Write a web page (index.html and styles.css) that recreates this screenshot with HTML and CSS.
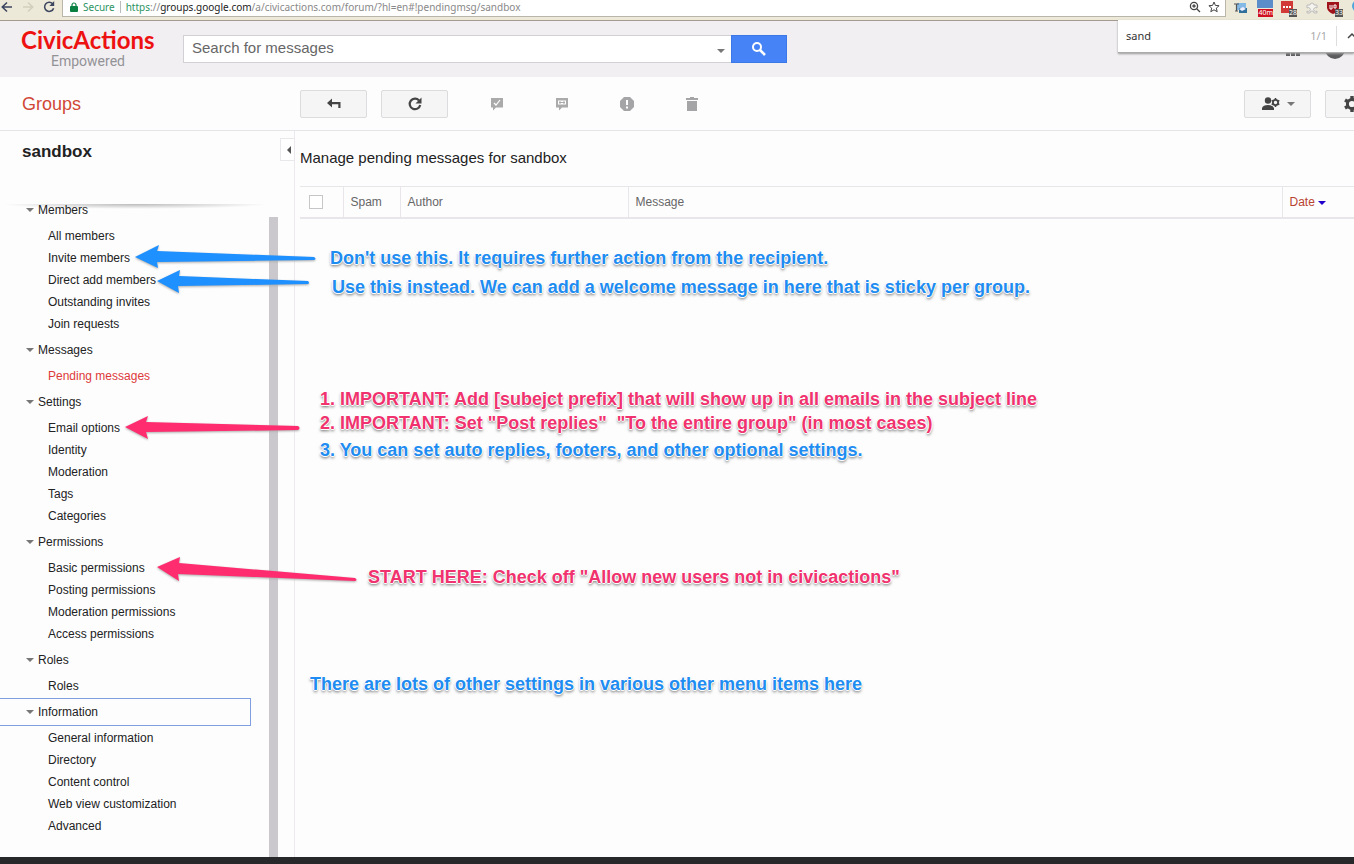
FILE: index.html
```html
<!DOCTYPE html>
<html lang="en">
<head>
<meta charset="utf-8">
<title>sandbox - Groups</title>
<link rel="stylesheet" href="styles.css">
</head>
<body>
<div class="browser">
  <div class="browser-nav">
    <button class="plain" aria-label="Back"><svg width="14" height="14" viewBox="0 0 14 14"><path d="M12 7H2.500M7 2.500L2.300 7L7 11.500" fill="none" stroke="#3d4660" stroke-width="1.600"/></svg></button>
    <button class="plain" aria-label="Forward"><svg width="14" height="14" viewBox="0 0 14 14"><path d="M2 7h9.500M7 2.500L11.700 7L7 11.500" fill="none" stroke="#d3cfbd" stroke-width="1.600"/></svg></button>
    <button class="plain" aria-label="Reload"><svg width="14" height="14" viewBox="0 0 14 14"><path d="M11 4.200A4.600 4.600 0 1 0 11.600 8.200" fill="none" stroke="#3d4660" stroke-width="1.600"/><path d="M12.200 1v5H7.400z" fill="#3d4660"/></svg></button>
  </div>
  <div class="address">
    <svg width="8" height="10" viewBox="0 0 8 10"><path d="M1 4h6q1 0 1 1v4q0 1-1 1H1q-1 0-1-1V5q0-1 1-1z" fill="#0b8043"/><path d="M2 4.500V3a2 2 0 0 1 4 0v1.500" fill="none" stroke="#0b8043" stroke-width="1.200"/></svg>
    <span class="secure">Secure</span>
    <span class="url"><span class="scheme">https</span>://<span class="host">groups.google.com</span>/a/civicactions.com/forum/?hl=en#!pendingmsg/sandbox</span>
    <span class="address-tools">
      <svg width="12" height="12" viewBox="0 0 12 12"><circle cx="5" cy="5" r="3.600" fill="none" stroke="#444" stroke-width="1.300"/><path d="M7.700 7.700L11 11M3.300 5h3.400M5 3.300v3.400" stroke="#444" stroke-width="1.300"/></svg>
      <svg width="12" height="12" viewBox="0 0 12 12"><path d="M6 1l1.400 3.400 3.700.3-2.800 2.400.9 3.600L6 8.800l-3.200 1.900.9-3.600L.9 4.700l3.700-.3z" fill="none" stroke="#444"/></svg>
    </span>
  </div>
  <div class="extensions">
    <svg width="16" height="18" viewBox="0 0 16 18"><path d="M4 3h9v7H4z" fill="#84b9e6"/><path d="M6 8h8v5H6z" fill="#2e6f9c"/><path d="M6 9l4-2 3 2-4 2z" fill="#eef"/><path d="M1 4h5M3.500 4v7M2 11h3" stroke="#555" stroke-width="1.200"/></svg>
    <span class="ext ext-calendar"><span class="tag">40m</span></span>
    <span class="ext ext-dots"><svg width="12" height="12" viewBox="0 0 12 12"><path d="M0 0h12v12H0z" fill="#d13a36"/><path d="M2 6h2M5 6h2M8 6h2" stroke="#fff" stroke-width="2"/></svg><span class="count">28</span></span>
    <svg width="14" height="18" viewBox="0 0 14 18"><path d="M2 5h3a2 2 0 1 1 4 0h3v3a2 2 0 1 0 0 3v2H9a2 2 0 1 0-4 0H2v-2a2 2 0 1 0 0-3z" fill="#f6f4ee" stroke="#bbb"/></svg>
    <span class="ext ext-shield"><svg width="12" height="13" viewBox="0 0 12 13"><path d="M0 1h12v6q-1 4-6 6q-5-2-6-6z" fill="#a0131b"/><path d="M3 4v4h2V4M7 4h2v3H7z" fill="none" stroke="#fff"/></svg><span class="count">33</span></span>
    <svg width="6" height="14" viewBox="0 0 6 14"><circle cx="7" cy="6" r="6" fill="#4da6dc"/></svg>
  </div>
</div>

<header class="header">
  <a class="logo" href="#"><span class="logo-name">CivicActions</span><span class="logo-sub">Empowered</span></a>
  <form class="search">
    <input class="search-input" type="text" aria-label="Search for messages" placeholder="Search for messages">
    <button class="search-menu" type="button" aria-label="Search options"><i class="caret"></i></button>
    <button class="search-button" type="button" aria-label="Search"><svg width="16" height="16" viewBox="0 0 16 16"><circle cx="6" cy="6" r="4" fill="none" stroke="#fff" stroke-width="2"/><path d="M9 9l5 5" stroke="#fff" stroke-width="2.600"/></svg></button>
  </form>
  <div class="account">
    <svg width="16" height="16" viewBox="0 0 16 16"><path d="M1 0h4v4H1zM6 0h4v4H6zM11 0h4v4h-4zM1 5h4v4H1zM6 5h4v4H6zM11 5h4v4h-4zM1 11h4v4H1zM6 11h4v4H6zM11 11h4v4h-4z" fill="#5c5c5e"/></svg>
    <svg width="20" height="20" viewBox="0 0 20 20"><circle cx="10" cy="10" r="10" fill="#5c5c5e"/></svg>
  </div>
</header>
<div class="find">
  <input class="find-input" type="text" aria-label="Find in page" value="sand">
  <span class="find-count">1/1</span>
  <button class="plain find-prev" aria-label="Previous match"><svg width="10" height="8" viewBox="0 0 10 8"><path d="M1 6l4-4 4 4" fill="none" stroke="#444" stroke-width="1.500"/></svg></button>
</div>

<div class="toolbar">
  <a class="product" href="#">Groups</a>
  <div class="actions">
    <button class="btn" aria-label="Back to topics"><svg width="16" height="14" viewBox="0 0 16 14"><path d="M1 6l5-4.500v3.500h8.500v6h-2.200V7.200H6v3.300z" fill="#444"/></svg></button>
    <button class="btn" aria-label="Refresh"><svg width="16" height="16" viewBox="0 0 16 16"><path d="M12 4.400A5.300 5.300 0 1 0 13.200 9" fill="none" stroke="#444" stroke-width="2.200"/><path d="M14.500 1.500v6h-6z" fill="#444"/></svg></button>
    <div class="ghosts">
      <button class="ghost" aria-label="Approve"><svg width="14" height="14" viewBox="0 0 14 14"><path d="M1 1h12v9.500H6L3 13.500v-3H1z" fill="#aaa"/><path d="M4 6l2 2 4-5" fill="none" stroke="#fff" stroke-width="1.200"/></svg></button>
      <button class="ghost" aria-label="Reply"><svg width="14" height="14" viewBox="0 0 14 14"><path d="M1 1h12v9.500H7L4 13.500v-3H1z" fill="#aaa"/><path d="M3 3.500h8v4H3z" fill="#fff"/><path d="M4 4.500h2v2H4zM8 4.500h2v2H8zM6 5h2v1H6z" fill="#aaa"/></svg></button>
      <button class="ghost" aria-label="Report spam"><svg width="14" height="14" viewBox="0 0 14 14"><path d="M4 0h6l4 4v6l-4 4H4l-4-4V4z" fill="#a5a5a7"/><path d="M6 3h2v5H6zM6 9.500h2v2H6z" fill="#fff"/></svg></button>
      <button class="ghost" aria-label="Delete"><svg width="14" height="16" viewBox="0 0 14 16"><path d="M5 1h4v1h4v2H1V2h4zM2 5h10v10H2z" fill="#a5a5a7"/></svg></button>
    </div>
  </div>
  <div class="settings">
    <button class="btn" aria-label="Membership settings"><svg width="20" height="14" viewBox="0 0 20 14"><circle cx="7" cy="3.500" r="3.200" fill="#444"/><path d="M1 13v-2q1-3 6-3t6 3v2z" fill="#444"/><circle cx="14.500" cy="5.500" r="2.600" fill="none" stroke="#444" stroke-width="1.800"/><path d="M14.500 1v2M14.500 8v2M10.700 3.300l1.500 1M16.800 6.700l1.500 1M10.700 7.700l1.500-1M16.800 4.300l1.500-1" stroke="#444" stroke-width="1.600"/></svg><i class="caret"></i></button>
    <button class="btn" aria-label="Settings"><svg width="18" height="18" viewBox="0 0 18 18"><circle cx="9" cy="9" r="4.600" fill="none" stroke="#444" stroke-width="3"/><path d="M9 1v3M9 14v3M2 5l2.600 1.500M13.400 11.500L16 13M2 13l2.600-1.500M13.400 6.500L16 5" stroke="#444" stroke-width="3.400"/></svg><i class="caret"></i></button>
  </div>
</div>

<div class="body">
  <aside class="sidebar">
    <h1 class="group-name">sandbox</h1>
    <button class="collapse" aria-label="Collapse sidebar"><i class="caret-left"></i></button>
    <div class="scroll-area">
      <nav class="menu">
        <section>
          <h2 class="head"><i class="caret"></i>Members</h2>
          <ul><li><a href="#">All members</a></li><li><a href="#">Invite members</a></li><li><a href="#">Direct add members</a></li><li><a href="#">Outstanding invites</a></li><li><a href="#">Join requests</a></li></ul>
        </section>
        <section>
          <h2 class="head"><i class="caret"></i>Messages</h2>
          <ul><li><a class="current" href="#">Pending messages</a></li></ul>
        </section>
        <section>
          <h2 class="head"><i class="caret"></i>Settings</h2>
          <ul><li><a href="#">Email options</a></li><li><a href="#">Identity</a></li><li><a href="#">Moderation</a></li><li><a href="#">Tags</a></li><li><a href="#">Categories</a></li></ul>
        </section>
        <section>
          <h2 class="head"><i class="caret"></i>Permissions</h2>
          <ul><li><a href="#">Basic permissions</a></li><li><a href="#">Posting permissions</a></li><li><a href="#">Moderation permissions</a></li><li><a href="#">Access permissions</a></li></ul>
        </section>
        <section>
          <h2 class="head"><i class="caret"></i>Roles</h2>
          <ul><li><a href="#">Roles</a></li></ul>
        </section>
        <section>
          <h2 class="head focused"><i class="caret"></i>Information</h2>
          <ul><li><a href="#">General information</a></li><li><a href="#">Directory</a></li><li><a href="#">Content control</a></li><li><a href="#">Web view customization</a></li><li><a href="#">Advanced</a></li></ul>
        </section>
      </nav>
      <div class="track"></div>
    </div>
  </aside>
  <main class="content">
    <h2 class="title">Manage pending messages for sandbox</h2>
    <table class="list">
      <thead><tr>
        <th class="col-check"><input type="checkbox" aria-label="Select all"></th>
        <th class="col-spam">Spam</th>
        <th class="col-author">Author</th>
        <th>Message</th>
        <th class="col-date">Date <i class="caret"></i></th>
      </tr></thead>
    </table>
  </main>
</div>
<footer class="dock"></footer>

<div class="notes">
  <svg class="arrows" width="400" height="620" viewBox="0 0 400 620">
    <g fill="#1e90ff">
      <path d="M135 257L159 245L157 251L314 257Q317 259 314 260L157 262L158 268z"/>
      <path d="M157 281L180 270L179 276L308 281Q310 283 308 284L178 286L179 293z"/>
    </g>
    <g fill="#ff2d6f">
      <path d="M125 427L148 416L146 422L298 426Q301 428 298 430L146 432L148 439z"/>
      <path d="M157 567L180 557L179 563L355 578Q358 580 355 581L178 574L179 581z"/>
    </g>
  </svg>
  <p class="note blue n1">Don't use this. It requires further action from the recipient.</p>
  <p class="note blue n2">Use this instead. We can add a welcome message in here that is sticky per group.</p>
  <p class="note pink n3">1. IMPORTANT: Add [subejct prefix] that will show up in all emails in the subject line</p>
  <p class="note pink n4">2. IMPORTANT: Set "Post replies"&nbsp; "To the entire group" (in most cases)</p>
  <p class="note blue n5">3. You can set auto replies, footers, and other optional settings.</p>
  <p class="note pink n6">START HERE: Check off "Allow new users not in civicactions"</p>
  <p class="note blue n7">There are lots of other settings in various other menu items here</p>
</div>
</body>
</html>
```
FILE: styles.css
```css
* { box-sizing: border-box; }
body {
  margin: 0;
  min-height: 100vh;
  display: flex;
  flex-direction: column;
  position: relative;
  overflow: hidden;
  background: #fdfdfe;
  color: #222;
  font: 12px/22px "Liberation Sans", Arial, sans-serif;
}
h1, h2, p, ul { margin: 0; padding: 0; font-weight: normal; }
ul { list-style: none; }
a { color: inherit; text-decoration: none; }
button { font: inherit; padding: 0; cursor: pointer; }
svg { display: block; flex: none; }
.plain { border: 0; background: none; }
.caret {
  flex: none;
  display: inline-block;
  border: 4px solid transparent;
  border-top-color: #777;
  border-bottom: 0;
}

/* browser bar */
.browser {
  display: flex;
  height: 21px;
  background: #ede9d9;
  border-bottom: 1px solid #a59a8e;
  font: 10px/14px "Noto Sans", sans-serif;
}
.browser-nav { display: flex; gap: 7px; width: 62px; height: 14px; }
.address {
  flex: 1;
  display: flex;
  align-items: center;
  gap: 5px;
  height: 17px;
  padding: 0 5px 3px 7px;
  background: #fff;
  border: 1px solid #b9b5aa;
  border-top: 0;
}
.secure { color: #2c9461; padding-right: 5px; border-right: 1px solid #bbb; line-height: 12px; }
.scheme { color: #2c9461; }
.url { color: #888; }
.host { color: #222; }
.address-tools { display: flex; gap: 7px; margin-left: auto; }
.extensions { display: flex; gap: 8px; padding-left: 7px; width: 128px; overflow: hidden; }
.ext { position: relative; width: 16px; height: 18px; flex: none; padding-top: 1px; }
.ext-calendar { border-top: 8px solid #5b8dca; }
.tag, .count { position: absolute; right: 0; bottom: 1px; color: #fff; font-size: 7px; line-height: 8px; }
.tag { background: #cf1020; }
.count { background: #555; }

/* header */
.header {
  display: flex;
  align-items: flex-start;
  height: 56px;
  padding-left: 21px;
  background: #f1eff2;
}
.logo { width: 162px; display: flex; flex-direction: column; }
.logo-name { color: #ee1111; font: bold 24px/36px "Liberation Sans Narrow", Lato, sans-serif; padding-top: 1px; }
.logo-sub { color: #939296; font: 14px/16px Roboto, sans-serif; padding-left: 30px; margin-top: -5px; }
.search { display: flex; width: 604px; height: 28px; margin-top: 14px; }
.search-input {
  flex: 1;
  min-width: 0;
  padding: 0 8px 3px;
  border: 1px solid #d2d0d4;
  border-right: 0;
  background: #fff;
  font: 15px "Liberation Sans", Arial, sans-serif;
}
.search-input::placeholder { color: #666; opacity: 1; }
.search-menu { width: 20px; border: 1px solid #d2d0d4; border-width: 1px 0; background: #fff; line-height: 8px; }
.search-button { display: flex; align-items: center; justify-content: center; width: 56px; border: 1px solid #3b78e7; background: #4683f6; }
.account { display: flex; gap: 24px; margin: 18px 9px 0 auto; align-items: center; }
.find {
  position: absolute;
  top: 20px;
  right: 0;
  width: 236px;
  height: 33px;
  display: flex;
  align-items: center;
  padding-left: 8px;
  background: #fff;
  border-bottom: 1px solid #aaa;
  box-shadow: 0 1px 2px #999;
  font: 11px/16px "Noto Sans", sans-serif;
}
.find-input { flex: 1; min-width: 0; padding: 0; border: 0; font: inherit; color: #333; }
.find-count { color: #aaa; padding-right: 9px; border-right: 1px solid #ddd; line-height: 20px; }
.find-prev { width: 17px; padding-left: 10px; overflow: hidden; }

/* toolbar */
.toolbar {
  display: flex;
  align-items: center;
  height: 54px;
  padding-top: 1px;
  border-bottom: 1px solid #e6e4e9;
}
.product { width: 300px; padding-left: 22px; color: #d14836; font-size: 18px; }
.actions { display: flex; gap: 14px; }
.settings { display: flex; gap: 14px; margin: 0 -38px 0 auto; }
.btn {
  display: flex;
  align-items: center;
  justify-content: center;
  gap: 6px;
  width: 67px;
  height: 28px;
  border: 1px solid #dcdcde;
  border-radius: 2px;
  background: #f5f5f6;
}
.ghosts { display: flex; margin-left: 2px; }
.ghost { display: flex; align-items: center; justify-content: center; width: 65px; height: 28px; border: 0; background: none; }

/* body */
.body { flex: 1; display: flex; }
.sidebar {
  position: relative;
  width: 295px;
  flex: none;
  display: flex;
  flex-direction: column;
  border-right: 1px solid #ebe9ee;
}
.group-name { height: 64px; padding: 10px 22px; font-size: 17px; font-weight: bold; }
.collapse {
  position: absolute;
  top: 7px;
  right: 0;
  width: 14px;
  height: 23px;
  padding-left: 3px;
  border: 1px solid #e8e8ea;
  border-right: 0;
  background: #fff;
  line-height: 8px;
}
.caret-left { display: inline-block; border: 4px solid transparent; border-right-color: #555; border-left: 0; }
.scroll-area { flex: 1; display: flex; justify-content: space-between; }
.menu { width: 251px; padding-bottom: 20px; }
.menu::before {
  content: "";
  position: absolute;
  top: 73px;
  left: 0;
  width: 270px;
  height: 5px;
  background: radial-gradient(ellipse at top, #bbb, transparent 70%);
}
.head { position: relative; display: flex; align-items: center; gap: 4px; height: 28px; margin: 1px 0; padding-left: 26px; font-size: 12px; border: 1px solid transparent; border-left: 0; }
.focused { border-color: #7f9fe0; }
.menu li { padding-left: 48px; }
.current { color: #dd3a3a; }
.track { width: 9px; margin: 22px 16px 0 0; background: #cac8cc; }
.content { flex: 1; min-width: 0; padding-left: 5px; }
.title { padding: 16px 0 17px; font-size: 15px; }
.list { width: 100%; border-collapse: collapse; border: 1px solid #e8e6ea; border-width: 1px 0 2px; }
.list th { height: 31px; padding: 0 7px; text-align: left; font-weight: normal; color: #666; border-left: 1px solid #e8e6ea; }
.list .col-check { width: 43px; border-left: 0; padding-left: 9px; }
.col-check input { display: block; appearance: none; width: 14px; height: 14px; margin: 0; border: 1px solid #c6c6c8; background: #fff; }
.col-spam { width: 57px; }
.col-author { width: 228px; }
.list .col-date { width: 72px; color: #b8432f; }
.col-date .caret { border-top-color: #2200cc; vertical-align: middle; }
.dock { height: 7px; background: #27282a; }

/* annotations over the page */
.notes { position: absolute; top: 0; left: 0; pointer-events: none; }
.arrows { filter: drop-shadow(0 1px 1px #aaa); }
.note {
  position: absolute;
  white-space: nowrap;
  font: bold 18px/24px "Liberation Sans", Helvetica, sans-serif;
  text-shadow: 1px 0 #fff, -1px 0 #fff, 0 1px #fff, 0 -1px #fff, 0 2px 3px #666;
}
.blue { color: #1e8cf0; }
.pink { color: #f0326e; }
.n1 { left: 330px; top: 246px; }
.n2 { left: 332px; top: 275px; }
.n3 { left: 320px; top: 387px; }
.n4 { left: 320px; top: 411px; }
.n5 { left: 320px; top: 438px; }
.n6 { left: 368px; top: 565px; }
.n7 { left: 310px; top: 672px; }
```
